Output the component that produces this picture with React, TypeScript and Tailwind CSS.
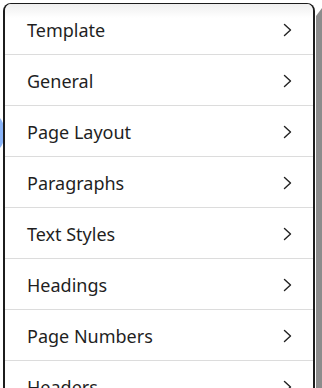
import React from 'react';

const items = [
  'Template',
  'General',
  'Page Layout',
  'Paragraphs',
  'Text Styles',
  'Headings',
  'Page Numbers',
  'Headers',
];

const Chevron: React.FC = () => (
  <svg width="9" height="14" viewBox="0 0 9 14" fill="none" className="shrink-0">
    <path d="M1.5 1.5 L7.5 7 L1.5 12.5" stroke="#222" strokeWidth="1.4" strokeLinecap="round" strokeLinejoin="round" />
  </svg>
);

const App: React.FC = () => {
  return (
    <div className="relative w-[322px] h-[388px] overflow-hidden bg-white" style={{ fontFamily: '"Noto Sans", "Open Sans", sans-serif' }}>
      {/* blue thing behind the panel */}
      <div className="absolute left-[-30px] top-[112px] w-[34px] h-[42px] rounded-full bg-[#8ab4f8]" />

      {/* scrollbar */}
      <div className="absolute right-0 top-0 w-[6px] h-[388px] flex flex-col">
        <div className="h-[16px] flex items-end justify-end">
          <div className="w-0 h-0 border-l-[6px] border-l-transparent border-b-[8px] border-b-[#8c8c8c]" />
        </div>
        <div className="flex-1 bg-[#8c8c8c]" />
      </div>

      <div className="relative ml-[3px] mt-[3px] w-[312px] rounded-t-[8px] border-x-2 border-t border-[#1c1c1c] bg-white overflow-hidden">
        <div className="absolute inset-x-0 top-0 h-[14px] bg-gradient-to-b from-[#efefef] to-white" />
        {items.map((label) => (
          <div key={label} className="relative flex items-center justify-between h-[51px] border-b border-[#dcdcdc] pt-[2px] pl-[22px] pr-[21px]">
            <span className="text-[18px] leading-[24px] text-[#1f1f1f]">{label}</span>
            <Chevron />
          </div>
        ))}
      </div>
    </div>
  );
};

export default App;
